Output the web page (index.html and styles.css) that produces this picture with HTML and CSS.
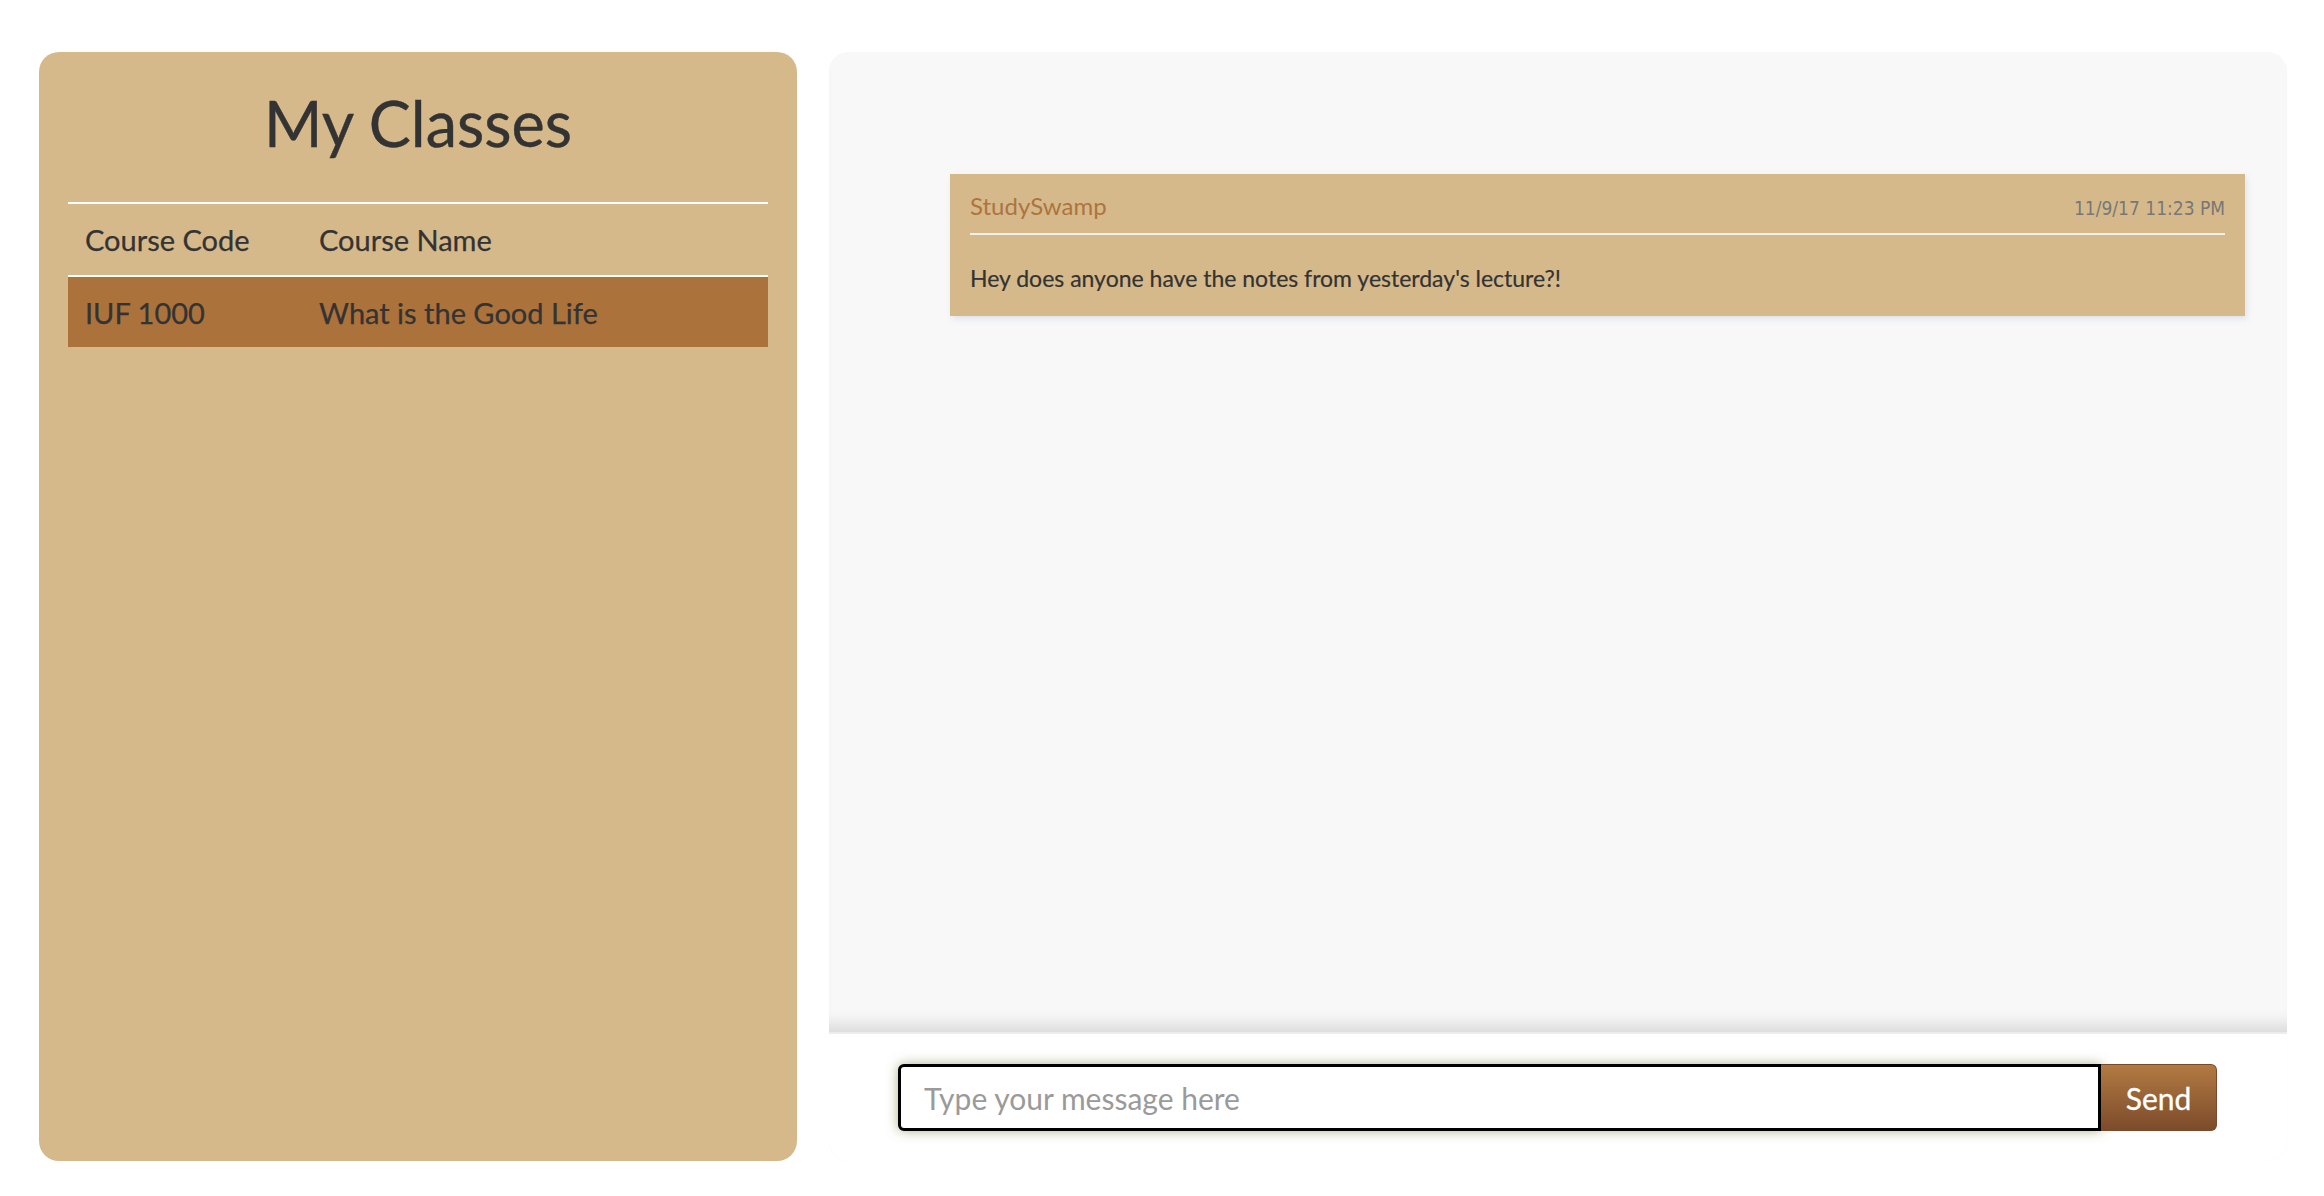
FILE: index.html
```html
<!DOCTYPE html>
<html>
<head>
<meta charset="utf-8">
<link rel="stylesheet" href="styles.css">
</head>
<body>
<div class="page">
  <aside class="classes">
    <h1 class="classes-title">My Classes</h1>
    <table class="class-table">
      <colgroup><col class="col-code"><col class="col-name"></colgroup>
      <thead>
        <tr><th>Course Code</th><th>Course Name</th></tr>
      </thead>
      <tbody>
        <tr class="active"><td>IUF 1000</td><td>What is the Good Life</td></tr>
      </tbody>
    </table>
  </aside>
  <main class="chat">
    <div class="messages">
      <div class="message">
        <div class="message-head">
          <span class="author">StudySwamp</span>
          <span class="time">11/9/17 11:23 PM</span>
        </div>
        <div class="message-body">Hey does anyone have the notes from yesterday's lecture?!</div>
      </div>
    </div>
    <form class="composer">
      <input class="composer-input" type="text" placeholder="Type your message here">
      <button class="composer-send" type="button">Send</button>
    </form>
  </main>
</div>
</body>
</html>
```

FILE: styles.css
```css
html, body {
  margin: 0;
  padding: 0;
  background: #ffffff;
}
body {
  font-family: Lato, "Noto Sans", sans-serif;
  color: #333333;
}
.page {
  display: flex;
  gap: 32px;
  padding: 52px 37px 35px 39px;
  height: 1196px;
  box-sizing: border-box;
}
.classes {
  width: 758px;
  flex: none;
  background: #d6b98a;
  border-radius: 20px;
  padding: 35px 29px 0;
  box-sizing: border-box;
}
.classes-title {
  margin: 0 0 43px;
  font-size: 63px;
  line-height: 72px;
  font-weight: 400;
  text-align: center;
  color: #333333;
  -webkit-text-stroke: 0.4px #333333;
}
.class-table {
  width: 100%;
  table-layout: fixed;
  border-collapse: collapse;
  font-size: 29px;
  color: #333333;
}
.class-table .col-code {
  width: 234px;
}
.class-table th,
.class-table td {
  text-align: left;
  font-weight: 400;
  padding: 0 17px;
  white-space: nowrap;
  -webkit-text-stroke: 0.25px #333333;
}
.class-table thead tr {
  height: 73px;
  border-top: 2px solid #ffffff;
  border-bottom: 2px solid #ffffff;
}
.class-table tbody tr {
  height: 71px;
}
.class-table tr.active {
  background: #ab723c;
}
.chat {
  flex: 1;
  display: flex;
  flex-direction: column;
  background: #ffffff;
  border-radius: 20px;
  box-shadow: 0 0 1px rgba(0,0,0,0.05);
}
.messages {
  flex: 1;
  background: #f8f8f8;
  border-radius: 20px 20px 0 0;
  padding: 122px 42px 0 121px;
  box-shadow: inset 0 -20px 16px -12px rgba(0,0,0,0.12);
  border-bottom: 2px solid #ececec;
}
.message {
  background: #d6b98a;
  padding: 0 20px;
  height: 142px;
  box-sizing: border-box;
  box-shadow: 2px 3px 6px rgba(190,205,220,0.45);
}
.message-head {
  display: flex;
  justify-content: space-between;
  align-items: baseline;
  height: 61px;
  padding-top: 17px;
  box-sizing: border-box;
  border-bottom: 2px solid #f3f0ea;
}
.author {
  font-size: 24px;
  color: #ad7440;
}
.time {
  font-family: "Liberation Sans Narrow", "DejaVu Sans Condensed", "Liberation Sans", sans-serif;
  font-size: 19px;
  color: #777777;
}
.message-body {
  padding-top: 29px;
  font-size: 23px;
  color: #333333;
  -webkit-text-stroke: 0.2px #333333;
}
.composer {
  height: 127px;
  margin: 0;
  display: flex;
  align-items: center;
  padding: 0 70px 0 69px;
  box-sizing: border-box;
}
.composer-input {
  flex: 1;
  height: 67px;
  box-sizing: border-box;
  border: 3px solid #000000;
  border-radius: 6px 0 0 6px;
  padding: 0 23px;
  font-family: Lato, "Noto Sans", sans-serif;
  font-size: 30px;
  color: #333333;
  background: #ffffff;
  box-shadow: 0 0 12px rgba(110,115,40,0.55);
  outline: none;
}
.composer-input::placeholder {
  color: #9a9a9a;
}
.composer-send {
  width: 116px;
  height: 67px;
  border: 1px solid #7a4a2a;
  border-left: none;
  border-radius: 0 6px 6px 0;
  background: linear-gradient(#b27a42, #7c4b2b);
  color: #ffffff;
  font-family: Lato, "Noto Sans", sans-serif;
  font-size: 30px;
  padding: 0;
  -webkit-text-stroke: 0.3px #ffffff;
}
```
